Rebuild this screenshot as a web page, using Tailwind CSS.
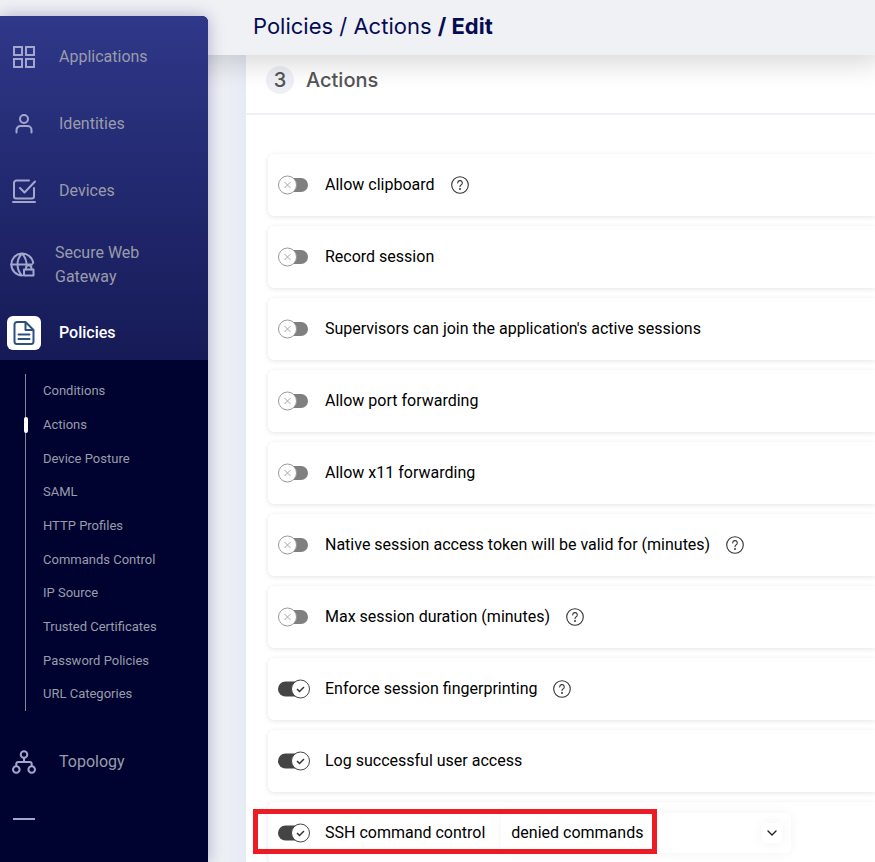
<!DOCTYPE html>
<html lang="en">
<head>
  <meta charset="UTF-8" />
  <meta name="viewport" content="width=device-width, initial-scale=1.0"/>
  <title>Policies / Actions / Edit</title>
  <script src="https://cdn.jsdelivr.net/npm/@tailwindcss/browser@4"></script>
</head>
<body class="flex h-screen flex-col overflow-hidden bg-linear-to-r from-[#edf0f4] from-[224px] to-[#e6eaf5] to-[246px] font-['Roboto',sans-serif] text-base text-black">

  <!-- Top bar -->
  <header class="relative z-10 flex h-[55px] shrink-0 items-center bg-[#f0f1f5] pb-1 pl-[253px] shadow-[0_2px_28px_6px_rgba(0,0,0,0.16)]">
    <nav aria-label="Breadcrumb" class="font-['Inter',sans-serif] text-[22px] leading-8 text-[#040b54]">
      <a href="#">Policies</a> / <a href="#">Actions</a> <span class="font-bold">/ Edit</span>
    </nav>
  </header>

  <div class="flex min-h-0 flex-1">

    <!-- Sidebar -->
    <aside class="relative z-20 -mt-[39px] mr-[38px] flex w-52 shrink-0 flex-col rounded-tr-md bg-[#00032f] text-[#9a9cab] shadow-[0_0_16px_rgba(50,40,120,0.35)]">
      <nav aria-label="Main" class="flex flex-1 flex-col">
        <div class="rounded-tr-md bg-linear-to-b from-[#2f3889] to-[#161a56] pt-[7px]">
          <a href="#" class="flex h-[67px] items-center gap-[23px] pl-3">
            <svg class="size-6 text-[#a3a6cd]" viewBox="0 0 24 24" fill="none" stroke="currentColor" stroke-width="2"><path d="M2 2h8v8H2zM14 2h8v8h-8zM2 14h8v8H2zM14 14h8v8h-8z"/></svg>
            Applications
          </a>
          <a href="#" class="flex h-[67px] items-center gap-[23px] pl-3">
            <svg class="size-6 text-[#a3a6cd]" viewBox="0 0 24 24" fill="none" stroke="currentColor" stroke-width="2" stroke-linecap="round"><circle cx="12" cy="7" r="4"/><path d="M4.500 20.500v-2.500a4 4 0 0 1 4-4h7a4 4 0 0 1 4 4v2.500"/></svg>
            Identities
          </a>
          <a href="#" class="flex h-[67px] items-center gap-[23px] pl-3">
            <svg class="size-6 text-[#a3a6cd]" viewBox="0 0 24 24" fill="none" stroke="currentColor" stroke-width="2" stroke-linecap="round" stroke-linejoin="round"><path d="M17 1.500H4.500a2.500 2.500 0 0 0-2.500 2.500v13.500a2 2 0 0 0 2 2h16a2 2 0 0 0 2-2V9M8 9l4.500 4.500L23 2.500M1 23h22"/></svg>
            Devices
          </a>
          <a href="#" class="flex h-[81px] items-center gap-5 pl-[10px]">
            <svg class="size-[25px] text-[#a3a6cd]" viewBox="0 0 25 25" fill="none" stroke="currentColor" stroke-width="2" stroke-linecap="round" stroke-linejoin="round">
              <path d="M12 23.500A11 11 0 1 1 23.200 11M1 12.500h11M1.500 12.500H22M12 1.500c-6 6-6 16 0 22M12 1.500c2.700 2.800 4.200 6.200 4.500 9.500"/>
              <rect x="14" y="17.500" width="9.500" height="6"/><path d="M16 17.500v-1.500a2.700 2.700 0 0 1 5.400 0v1.500"/>
            </svg>
            <span class="leading-6">Secure Web<br/>Gateway</span>
          </a>
          <a href="#" class="flex h-[55px] items-center gap-[18px] pl-[7px] font-medium text-white">
            <span class="flex size-[34px] items-center justify-center rounded-md bg-white text-[#2c5080]">
              <svg class="size-6" viewBox="0 0 24 24" fill="none" stroke="currentColor" stroke-width="2" stroke-linecap="round" stroke-linejoin="round"><path d="M13.500 1H5a2.500 2.500 0 0 0-2.500 2.500v17A2.500 2.500 0 0 0 5 23h14a2.500 2.500 0 0 0 2.500-2.500V9zM13.500 1v8h8M6.500 13.500h11M6.500 18h11"/></svg>
            </span>
            Policies
          </a>
        </div>

        <!-- Policies submenu -->
        <ul class="mt-[14px] ml-[25px] flex min-h-[337px] flex-col border-l border-[#85879a] text-[13px]">
          <li class="flex flex-1 items-center pl-[17px]"><a href="#">Conditions</a></li>
          <li class="relative flex flex-1 items-center pl-[17px]">
            <span class="absolute -left-[2px] h-4 w-1 rounded-xs bg-white"></span>
            <a href="#">Actions</a>
          </li>
          <li class="flex flex-1 items-center pl-[17px]"><a href="#">Device Posture</a></li>
          <li class="flex flex-1 items-center pl-[17px]"><a href="#">SAML</a></li>
          <li class="flex flex-1 items-center pl-[17px]"><a href="#">HTTP Profiles</a></li>
          <li class="flex flex-1 items-center pl-[17px]"><a href="#">Commands Control</a></li>
          <li class="flex flex-1 items-center pl-[17px]"><a href="#">IP Source</a></li>
          <li class="flex flex-1 items-center pl-[17px]"><a href="#">Trusted Certificates</a></li>
          <li class="flex flex-1 items-center pl-[17px]"><a href="#">Password Policies</a></li>
          <li class="flex flex-1 items-center pl-[17px]"><a href="#">URL Categories</a></li>
        </ul>

        <a href="#" class="mt-[17px] flex h-[67px] shrink-0 items-center gap-[23px] pl-3">
          <svg class="size-6 text-[#a3a6cd]" viewBox="0 0 24 24" fill="none" stroke="currentColor" stroke-width="2"><circle cx="12" cy="4.500" r="3.300"/><circle cx="4.300" cy="19.500" r="3.300"/><circle cx="19.700" cy="19.500" r="3.300"/><path d="M12 7.800V12M4.300 16.200V14a2 2 0 0 1 2-2h11.400a2 2 0 0 1 2 2v2.200"/></svg>
          Topology
        </a>
        <div class="flex h-12 shrink-0 items-center pl-[13px]">
          <span class="h-[2px] w-[22px] bg-[#a3a6cd]"></span>
        </div>
      </nav>
    </aside>

    <!-- Content -->
    <main class="min-w-0 flex-1 bg-white">
      <div class="flex h-[60px] items-center gap-3 border-b-2 border-[#eff0f5] pb-[9px] pl-5 font-['Inter',sans-serif] text-xl font-medium text-[#555]">
        <span class="flex size-7 items-center justify-center rounded-full bg-[#eff0f5]">3</span>
        <h1>Actions</h1>
      </div>

      <form id="actionsForm" class="flex flex-col gap-[10px] pt-[39px] pl-[22px]">
        <!-- Action rows will appear here -->
      </form>
    </main>
  </div>

  <script>
    const form = document.getElementById('actionsForm');

    const actions = [
      { id: 'clipboard', label: 'Allow clipboard', help: true },
      { id: 'record', label: 'Record session' },
      { id: 'supervisors', label: "Supervisors can join the application's active sessions" },
      { id: 'portForwarding', label: 'Allow port forwarding' },
      { id: 'x11', label: 'Allow x11 forwarding' },
      { id: 'tokenValid', label: 'Native session access token will be valid for (minutes)', help: true },
      { id: 'maxDuration', label: 'Max session duration (minutes)', help: true },
      { id: 'fingerprint', label: 'Enforce session fingerprinting', help: true, on: true },
      { id: 'logAccess', label: 'Log successful user access', on: true },
      { id: 'sshControl', label: 'SSH command control', on: true, select: ['denied commands'], highlight: true }
    ];

    const helpButton = `
      <button type="button" aria-label="Help" class="ml-4 text-[#333]">
        <svg class="size-[18px]" viewBox="0 0 18 18" fill="none" stroke="currentColor" stroke-width="1.100" stroke-linecap="round">
          <circle cx="9" cy="9" r="8.300"/>
          <path d="M6.700 6.900a2.300 2.300 0 1 1 3.300 2.100c-.7.400-1 .8-1 1.600"/>
          <circle cx="9" cy="13" r=".4" fill="currentColor"/>
        </svg>
      </button>`;

    function renderSelect(options) {
      return `
        <div class="relative ml-4 w-[290px]">
          <select aria-label="Command list" class="h-10 w-full appearance-none rounded-md bg-white px-[10px] shadow-[0_0_12px_rgba(0,0,0,0.05)] focus:outline-none">
            ${options.map(o => `<option>${o}</option>`).join('')}
          </select>
          <span class="pointer-events-none absolute top-[10px] right-[9px] flex size-5 items-center justify-center rounded-sm bg-white shadow-[0_0_14px_rgba(0,0,0,0.06)]">
            <svg class="size-[10px]" viewBox="0 0 10 10" fill="none" stroke="#222" stroke-width="1.400" stroke-linecap="round" stroke-linejoin="round"><path d="M1 3l4 4 4-4"/></svg>
          </span>
        </div>`;
    }

    actions.forEach(action => {
      const row = document.createElement('div');
      row.className = 'relative flex h-[62px] items-center rounded-l-md bg-white pl-[10px] shadow-[0_1px_5px_rgba(0,0,0,0.11)]';

      row.innerHTML = `
        <span class="relative h-5 w-8">
          <input type="checkbox" id="${action.id}" ${action.on ? 'checked' : ''} class="peer absolute inset-0 m-0 cursor-pointer appearance-none"/>
          <svg class="pointer-events-none h-5 w-8 peer-checked:hidden" viewBox="0 0 32 20" fill="none">
            <rect x="4" y="3" width="26" height="14" rx="7" fill="#808080"/>
            <circle cx="9.500" cy="10" r="9" fill="#fff" stroke="#999"/>
            <path d="M6.500 7l6 6M12.500 7l-6 6" stroke="#aaa"/>
          </svg>
          <svg class="pointer-events-none hidden h-5 w-8 peer-checked:block" viewBox="0 0 32 20" fill="none">
            <rect x="0" y="2.500" width="28" height="15" rx="7.500" fill="#444"/>
            <circle cx="22.500" cy="10" r="9" fill="#fff" stroke="#444"/>
            <path d="M19 10l2.500 2.500L26 8" stroke="#333" stroke-width="1.500"/>
          </svg>
        </span>
        <label for="${action.id}" class="ml-[15px] cursor-pointer whitespace-nowrap">${action.label}</label>
        ${action.help ? helpButton : ''}
        ${action.select ? renderSelect(action.select) : ''}
        ${action.highlight ? '<div class="pointer-events-none absolute top-[7px] -left-[15px] h-[45px] w-[404px] border-5 border-[#ed1c24]"></div>' : ''}
      `;
      form.appendChild(row);
    });
  </script>
</body>
</html>
